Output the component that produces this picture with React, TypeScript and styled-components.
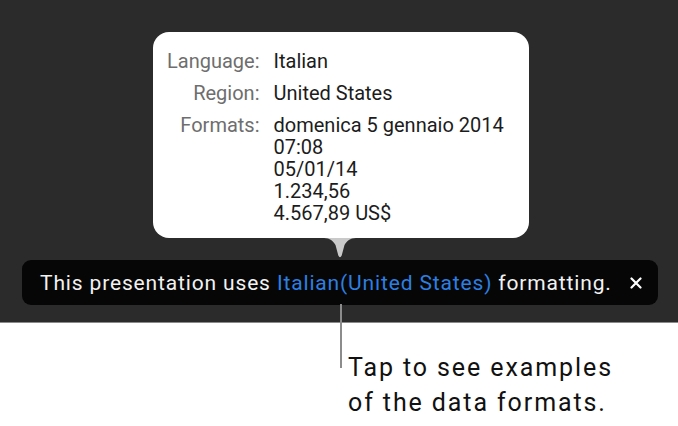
import { Fragment } from "react";
import styled, { createGlobalStyle } from "styled-components";

const GlobalStyle = createGlobalStyle`
  html, body {
    margin: 0;
    padding: 0;
    background: #ffffff;
  }
  body {
    font-family: Roboto, "Liberation Sans", sans-serif;
    -webkit-font-smoothing: antialiased;
  }
`;

const Page = styled.div`
  width: 678px;
  height: 426px;
  overflow: hidden;
  background: #ffffff;
`;

const Stage = styled.div`
  height: 323px;
  border-bottom: 1px solid #8a8a8a;
  background: #2b2b2b;
  display: flex;
  flex-direction: column;
  align-items: flex-start;
  padding: 32px 20px 0 22px;
  box-sizing: border-box;
`;

const Popover = styled.div`
  position: relative;
  margin-left: 131px;
  width: 376px;
  box-sizing: border-box;
  padding: 18px 20px 14px 14px;
  background: #ffffff;
  border-radius: 16px;
  display: grid;
  grid-template-columns: auto 1fr;
  column-gap: 14px;
  row-gap: 10px;
  font-size: 20px;
  line-height: 22px;
`;

const Label = styled.div`
  color: #6e6e6e;
  text-align: right;
`;

const Value = styled.div`
  color: #1c1c1c;
  display: flex;
  flex-direction: column;
`;

const Arrow = styled.svg`
  position: absolute;
  top: 100%;
  left: 171px;
  display: block;
`;

const Banner = styled.div`
  margin-top: 22px;
  width: 636px;
  height: 45px;
  box-sizing: border-box;
  padding: 0 15px 0 18px;
  background: #060606;
  border-radius: 9px;
  display: flex;
  align-items: center;
  justify-content: space-between;
`;

const Message = styled.div`
  color: #f2f2f2;
  font-size: 21px;
  letter-spacing: 0.85px;
  white-space: nowrap;
`;

const Locale = styled.span`
  color: #2d7fe2;
`;

const CloseButton = styled.button`
  border: 0;
  padding: 0;
  background: transparent;
  width: 14px;
  height: 14px;
  display: flex;
  align-items: center;
  justify-content: center;
  cursor: pointer;
`;

const Caption = styled.div`
  display: flex;
  align-items: flex-start;
  padding-left: 340px;
`;

const Leader = styled.div`
  width: 2px;
  height: 64px;
  margin-top: -19px;
  background: #8c8c8c;
`;

const CaptionText = styled.div`
  margin-left: 6px;
  padding-top: 27px;
  font-size: 25px;
  line-height: 35px;
  letter-spacing: 1.9px;
  color: #111111;
`;

const rows: { label: string; values: string[] }[] = [
  { label: "Language:", values: ["Italian"] },
  { label: "Region:", values: ["United States"] },
  {
    label: "Formats:",
    values: [
      "domenica 5 gennaio 2014",
      "07:08",
      "05/01/14",
      "1.234,56",
      "4.567,89 US$",
    ],
  },
];

const App = () => {
  return (
    <Page>
      <GlobalStyle />
      <Stage>
        <Popover>
          {rows.map((row) => (
            <Fragment key={row.label}>
              <Label>{row.label}</Label>
              <Value>
                {row.values.map((v) => (
                  <span key={v}>{v}</span>
                ))}
              </Value>
            </Fragment>
          ))}
          <Arrow width="32" height="21" viewBox="0 0 32 21">
            <path
              d="M0 0 C6 0 9 3 11.5 7 L14.3 17.5 Q16 21 17.7 17.5 L20.5 7 C23 3 26 0 32 0 Z"
              fill="#c9c9c9"
            />
          </Arrow>
        </Popover>
        <Banner>
          <Message>
            This presentation uses <Locale>Italian(United States)</Locale>{" "}
            formatting.
          </Message>
          <CloseButton aria-label="Close">
            <svg width="12" height="12" viewBox="0 0 12 12">
              <path
                d="M1.5 1.5 L10.5 10.5 M10.5 1.5 L1.5 10.5"
                stroke="#ffffff"
                strokeWidth="2.2"
                strokeLinecap="round"
              />
            </svg>
          </CloseButton>
        </Banner>
      </Stage>
      <Caption>
        <Leader />
        <CaptionText>
          Tap to see examples
          <br />
          of the data formats.
        </CaptionText>
      </Caption>
    </Page>
  );
};

export default App;
